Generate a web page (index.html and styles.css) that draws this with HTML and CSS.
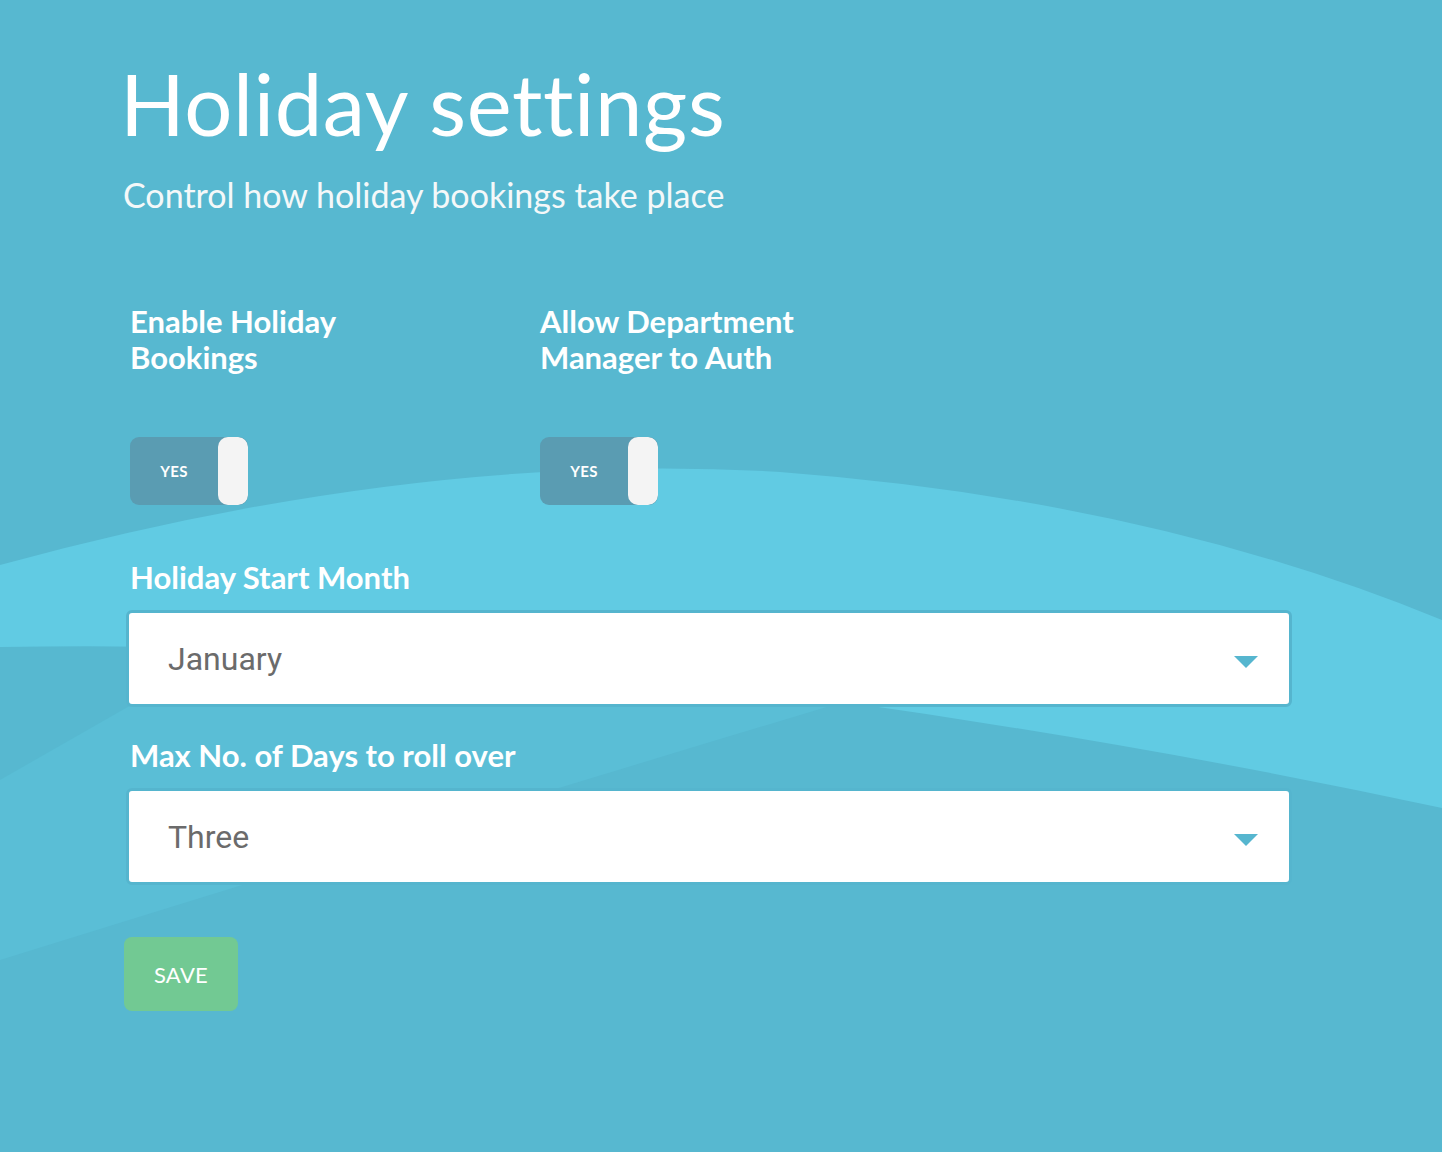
FILE: index.html
```html
<!DOCTYPE html>
<html lang="en">
<head>
<meta charset="utf-8">
<title>Holiday settings</title>
<link rel="stylesheet" href="styles.css">
</head>
<body>
<svg class="backdrop" width="1442" height="1152" viewBox="0 0 1442 1152" preserveAspectRatio="none" aria-hidden="true">
  <rect x="0" y="0" width="1442" height="1152" fill="#57b8d0"/>
  <path d="M0,960 L0,780 L140,700 Q380,560 560,520 Q700,490 850,700 Q450,820 0,960 Z" fill="#5abed6"/>
  <path d="M0,565 Q420,450 780,472 Q1150,500 1442,620 L1442,808 Q1150,745 830,700 Q420,640 0,647 Z" fill="#61cbe3"/>
</svg>
<main class="page">
  <header class="head">
    <h1 class="title">Holiday settings</h1>
    <p class="subtitle">Control how holiday bookings take place</p>
  </header>
  <form class="form">
    <div class="toggles">
      <div class="toggle-field">
        <div class="field-label two-line">Enable Holiday<br>Bookings</div>
        <div class="toggle">
          <span class="toggle-text">YES</span>
          <span class="toggle-thumb"></span>
        </div>
      </div>
      <div class="toggle-field">
        <div class="field-label two-line">Allow Department<br>Manager to Auth</div>
        <div class="toggle">
          <span class="toggle-text">YES</span>
          <span class="toggle-thumb"></span>
        </div>
      </div>
    </div>
    <div class="select-field first">
      <div class="field-label">Holiday Start Month</div>
      <div class="select">
        <span class="select-value">January</span>
        <span class="select-arrow"></span>
      </div>
    </div>
    <div class="select-field second">
      <div class="field-label">Max No. of Days to roll over</div>
      <div class="select">
        <span class="select-value">Three</span>
        <span class="select-arrow"></span>
      </div>
    </div>
    <button type="button" class="save">SAVE</button>
  </form>
</main>
</body>
</html>
```
FILE: styles.css
```css
html, body {
  margin: 0;
  padding: 0;
}
body {
  width: 1442px;
  height: 1152px;
  overflow: hidden;
  position: relative;
  background: #57b8d0;
  font-family: Lato, "Open Sans", sans-serif;
  color: #ffffff;
}
.backdrop {
  position: absolute;
  left: 0;
  top: 0;
  z-index: 0;
}
.page {
  position: relative;
  z-index: 1;
  padding: 50px 0 0 120px;
}
.title {
  margin: 0;
  font-size: 85px;
  line-height: 106px;
  font-weight: 400;
  letter-spacing: 0.6px;
}
.subtitle {
  margin: 19px 0 0 3px;
  font-size: 34px;
  line-height: 40px;
  font-weight: 400;
  color: #f4f8f9;
}
.form {
  margin-top: 88px;
  padding-left: 6px;
  display: flex;
  flex-direction: column;
}
.toggles {
  display: flex;
}
.toggle-field {
  width: 406px;
  flex: none;
  display: flex;
  flex-direction: column;
  padding-left: 4px;
}
.field-label {
  font-size: 31px;
  line-height: 36px;
  font-weight: 700;
  letter-spacing: 0;
}
.two-line {
  height: 72px;
}
.toggle {
  margin-top: 62px;
  width: 118px;
  height: 68px;
  border-radius: 9px;
  background: #5a9cb2;
  display: flex;
  align-items: center;
  overflow: hidden;
}
.toggle-text {
  width: 88px;
  text-align: center;
  font-size: 15px;
  font-weight: 700;
  letter-spacing: 0.3px;
}
.toggle-thumb {
  width: 30px;
  height: 68px;
  border-radius: 10px;
  background: #f4f4f4;
}
.select-field {
  display: flex;
  flex-direction: column;
}
.select-field .field-label {
  padding-left: 4px;
}
.select-field.first {
  margin-top: 54px;
}
.select-field.second {
  margin-top: 30px;
}
.select {
  margin-top: 15px;
  width: 1166px;
  height: 97px;
  box-sizing: border-box;
  border: 3px solid #55b5ce;
  border-radius: 6px;
  background: #ffffff;
  display: flex;
  align-items: center;
  justify-content: space-between;
  padding: 0 31px 0 39px;
}
.select-value {
  font-family: Roboto, "Liberation Sans", sans-serif;
  font-size: 32px;
  color: #6b6b6b;
}
.select-arrow {
  width: 0;
  height: 0;
  border-left: 12px solid transparent;
  border-right: 12px solid transparent;
  border-top: 12px solid #56b6cf;
  margin-top: 6px;
}
.save {
  margin-top: 52px;
  margin-left: -2px;
  width: 114px;
  height: 74px;
  border: none;
  border-radius: 8px;
  background: #72c993;
  color: #ffffff;
  font-family: Lato, "Open Sans", sans-serif;
  font-size: 22px;
  font-weight: 400;
  letter-spacing: 0.3px;
  cursor: pointer;
  padding: 0;
}
```
